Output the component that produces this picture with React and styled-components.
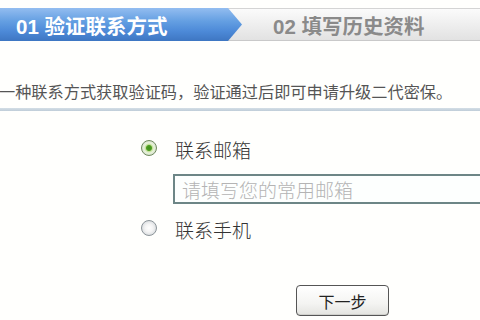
import React, { useState } from 'react';
import styled, { createGlobalStyle } from 'styled-components';

const GlobalStyle = createGlobalStyle`
  html, body {
    margin: 0;
    padding: 0;
    background: #fffffd;
    overflow: hidden;
  }
  body {
    font-family: "Noto Sans CJK SC", "Liberation Sans", sans-serif;
  }
`;

const Page = styled.div`
  width: 480px;
  height: 320px;
  overflow: hidden;
  padding-top: 8px;
  box-sizing: border-box;
`;

const Steps = styled.div`
  display: flex;
  align-items: stretch;
  height: 33px;
  background: linear-gradient(#fbfbfb, #ececec 60%, #e2e2e2);
  border-top: 1px solid #d4d4d4;
  border-bottom: 1px solid #c9c9c9;
  box-sizing: border-box;
`;

const Step = styled.div`
  display: flex;
  align-items: center;
  font-family: "Liberation Sans", "Noto Sans CJK SC", sans-serif;
  font-size: 20.5px;
  font-weight: bold;
  white-space: nowrap;
  color: ${(p) => (p.active ? '#ffffff' : '#8a8a8a')};
  ${(p) =>
    p.active
      ? `
    width: 242px;
    margin: -1px 0;
    padding-left: 16px;
    box-sizing: border-box;
    background: linear-gradient(#93bdf0, #649fe2 40%, #4d8ad8 70%, #3e76c2);
    clip-path: polygon(0 0, 228px 0, 242px 50%, 228px 100%, 0 100%);
  `
      : `
    padding-left: 31px;
  `}
`;

const Intro = styled.p`
  margin: 40px 0 0 -1px;
  font-size: 16.2px;
  line-height: 20px;
  color: #555;
  white-space: nowrap;
`;

const Divider = styled.div`
  margin-top: 7px;
  height: 3px;
  background: linear-gradient(#d4dee6, #bfcdd8);
`;

const Form = styled.div`
  display: flex;
  flex-direction: column;
  align-items: flex-start;
  padding-left: 141px;
  margin-top: 25px;
`;

const Option = styled.label`
  display: flex;
  align-items: center;
  gap: 18px;
  height: 24px;
  font-size: 19px;
  font-weight: 300;
  color: #333;
  cursor: pointer;
  margin-top: ${(p) => p.offset || 0}px;
`;

const Radio = styled.span`
  width: 16px;
  height: 16px;
  border-radius: 50%;
  border: 1px solid ${(p) => (p.checked ? '#6f8a5e' : '#8c9499')};
  background: ${(p) =>
    p.checked
      ? 'radial-gradient(circle, #3f8f1a 0, #4e9e22 2.5px, #c4e19a 3.5px, #e9f3dc 5px, #cfd8c6 8px)'
      : 'radial-gradient(circle, #ffffff 0, #f4f4f4 4px, #d6dadd 8px)'};
  box-sizing: border-box;
  flex-shrink: 0;
`;

const Text = styled.span`
  line-height: 24px;
  transform: translateY(2px);
`;

const InputRow = styled.div`
  align-self: stretch;
  box-sizing: border-box;
  padding-left: 32px;
  margin-top: 14px;
  overflow: hidden;
`;

const EmailInput = styled.input`
  display: block;
  width: 100%;
  height: 30px;
  margin: 0;
  box-sizing: border-box;
  border: 2px solid #6d8686;
  border-right: none;
  background: #fdfffe;
  padding: 0 7px;
  font-family: "Noto Sans CJK SC", sans-serif;
  font-size: 19px;
  font-weight: 300;
  color: #333;
  outline: none;
  &::placeholder {
    color: #b4b4b4;
  }
`;

const Button = styled.button`
  margin: 45px 0 0 155px;
  width: 93px;
  height: 31px;
  border: 1px solid #555;
  border-radius: 4px;
  background: linear-gradient(#ffffff, #f4f4f2 60%, #e4e4e0);
  box-shadow: inset 0 -1px 0 #d0d0cc;
  font-family: "Noto Sans CJK SC", sans-serif;
  font-size: 16px;
  color: #222;
  cursor: pointer;
`;

export default function App() {
  const [method, setMethod] = useState('email');

  return (
    <>
      <GlobalStyle />
      <Page>
        <Steps>
          <Step active>01 验证联系方式</Step>
          <Step>02 填写历史资料</Step>
        </Steps>
        <Intro>一种联系方式获取验证码，验证通过后即可申请升级二代密保。</Intro>
        <Divider />
        <Form>
          <Option onClick={() => setMethod('email')}>
            <Radio checked={method === 'email'} />
            <Text>联系邮箱</Text>
          </Option>
          <InputRow>
            <EmailInput placeholder="请填写您的常用邮箱" />
          </InputRow>
          <Option offset={12} onClick={() => setMethod('phone')}>
            <Radio checked={method === 'phone'} />
            <Text>联系手机</Text>
          </Option>
          <Button>下一步</Button>
        </Form>
      </Page>
    </>
  );
}
